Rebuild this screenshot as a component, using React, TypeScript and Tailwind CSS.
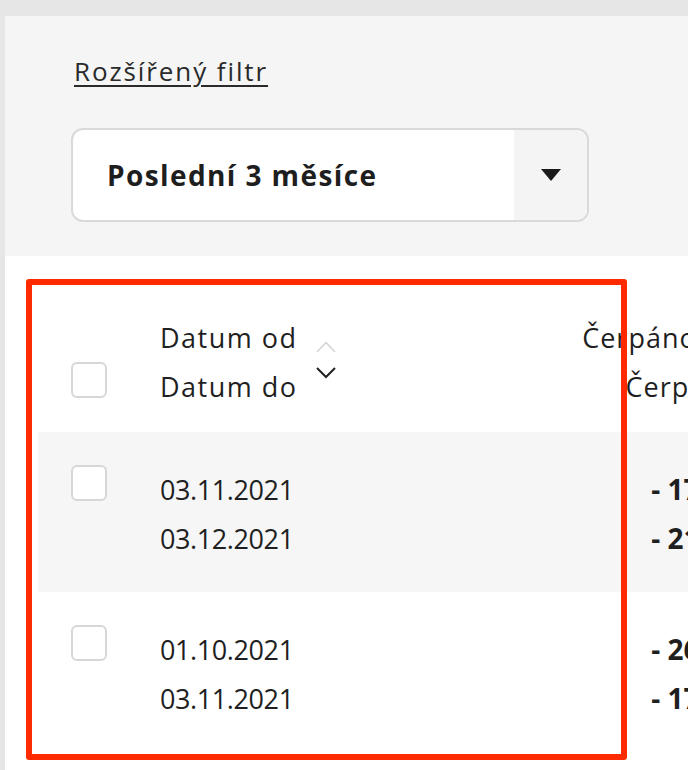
import React from 'react';

const rows = [
  { from: '03.11.2021', to: '03.12.2021', a: '- 17 450 Kč', b: '- 21 390 Kč', shade: true },
  { from: '01.10.2021', to: '03.11.2021', a: '- 26 480 Kč', b: '- 17 450 Kč', shade: false },
];

function Checkbox({ className = '' }: { className?: string }) {
  return <div className={`w-[36px] h-[36px] shrink-0 rounded-[6px] border-2 border-[#d7d7d7] bg-white ${className}`}></div>;
}

function SortArrows() {
  return (
    <svg width="20" height="38" viewBox="0 0 20 38" fill="none" className="shrink-0 -mt-[4px]">
      <polyline points="1,11 10,1.5 19,11" stroke="#d2d2d2" strokeWidth="1.5" />
      <polyline points="1,27 10,36 19,27" stroke="#222" strokeWidth="2" />
    </svg>
  );
}

export default function App() {
  return (
    <div className="h-[770px] overflow-hidden bg-[#e6e6e6] pt-[16px] pl-[5px] font-['Open_Sans',sans-serif] text-[#1f1f1f]">
      {/* filtr */}
      <div className="h-[240px] bg-[#f5f5f5] pl-[66px] pt-[39px]">
        <a className="ml-[3px] block w-fit text-[26px] leading-[32px] tracking-[1.9px] text-[#2a2a2a] underline underline-offset-[4px] decoration-[1.5px]">
          Rozšířený filtr
        </a>
        <div className="mt-[41px] flex h-[94px] w-[518px] overflow-hidden rounded-[12px] border-2 border-[#d9d9d9] bg-white">
          <div className="flex flex-1 items-center pl-[34px] text-[28px] font-bold tracking-[1.4px] text-[#1e1e1e]">
            Poslední 3 měsíce
          </div>
          <div className="flex w-[73px] items-center justify-center bg-[#f4f4f4]">
            <svg width="20" height="12" viewBox="0 0 20 12">
              <polygon points="0,0 20,0 10,12" fill="#1a1a1a" />
            </svg>
          </div>
        </div>
      </div>

      {/* tabulka */}
      <div className="relative h-[514px] overflow-hidden bg-white pl-[33px]">
        <div className="w-[900px]">
          <div className="flex items-start pl-[33px] pt-[57px] pb-[21px]">
            <Checkbox className="mt-[49px]" />
            <div className="ml-[53px] flex w-[310px] items-center">
              <div className="text-[27px] leading-[49px] tracking-[1.5px]">
                <div>Datum od</div>
                <div>Datum do</div>
              </div>
              <div className="ml-[18px]">
                <SortArrows />
              </div>
            </div>
            <div className="w-[330px] text-right text-[27px] leading-[49px] tracking-[1px]">
              <div>Čerpáno celkem</div>
              <div>Čerpáno CZK</div>
            </div>
          </div>

          {rows.map((r, i) => (
            <div key={i} className={`flex h-[160px] items-start pl-[33px] pt-[33px] ${r.shade ? 'bg-[#f6f6f6]' : 'bg-white'}`}>
              <Checkbox />
              <div className="ml-[53px] w-[310px] text-[27px] leading-[49px] tracking-[-0.4px]">
                <div>{r.from}</div>
                <div>{r.to}</div>
              </div>
              <div className="w-[325px] text-right text-[28px] font-bold leading-[49px]">
                <div>{r.a}</div>
                <div>{r.b}</div>
              </div>
            </div>
          ))}
        </div>

        <div className="pointer-events-none absolute left-[21px] top-[23px] h-[481px] w-[601px] rounded-[3px] border-[6px] border-[#ff2a00]"></div>
      </div>
    </div>
  );
}
